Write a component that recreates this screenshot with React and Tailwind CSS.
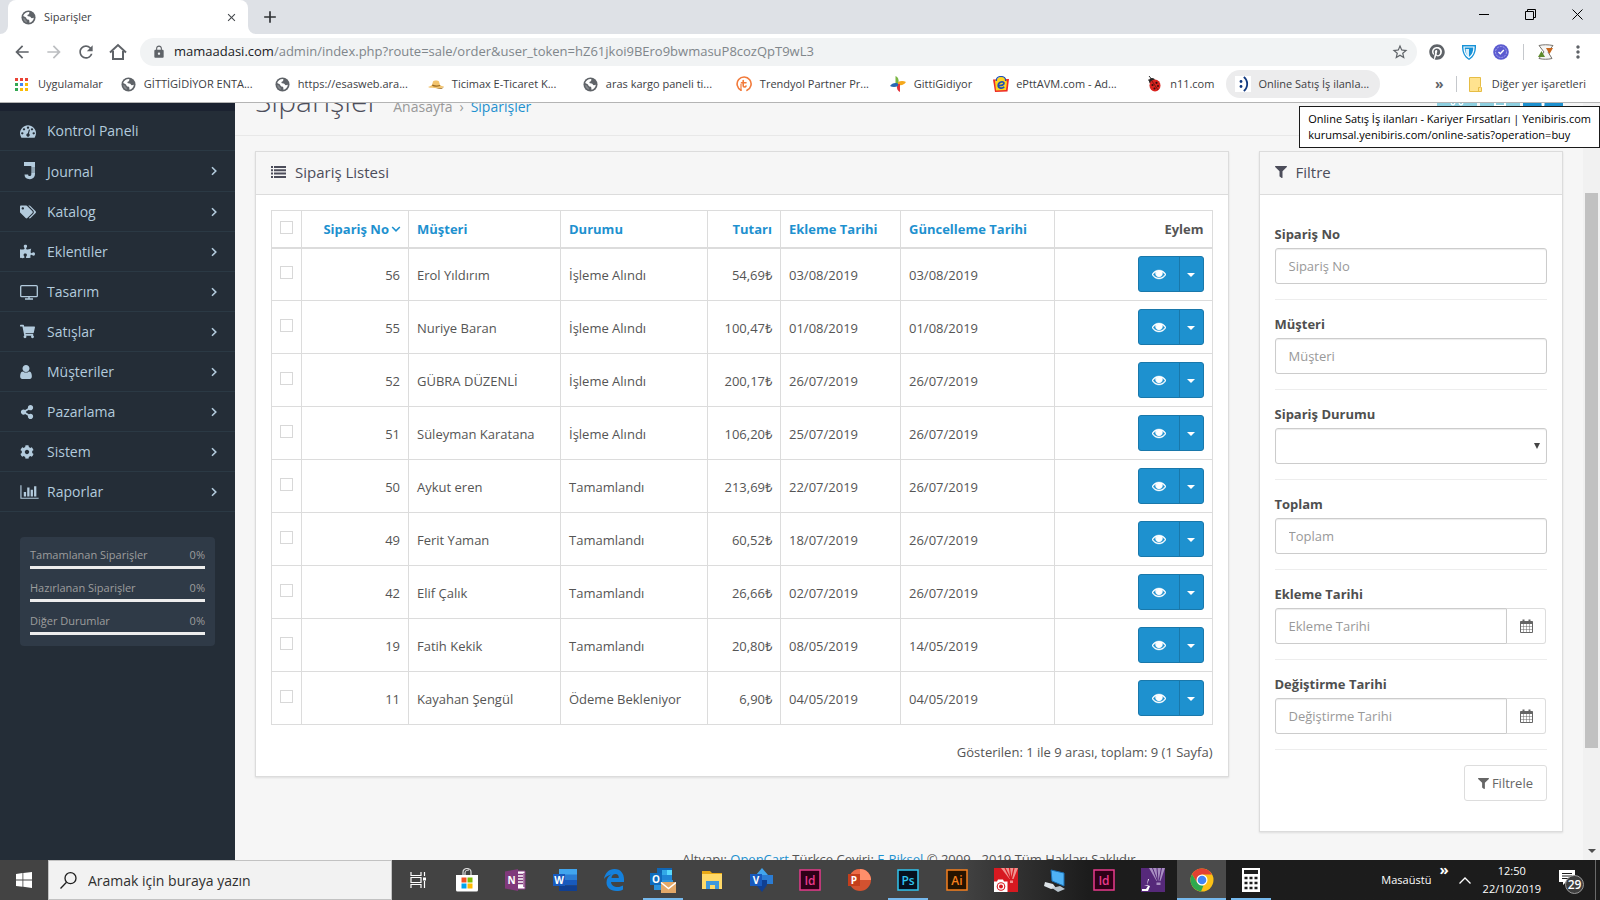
import { useState } from "react";
import {
  FaCog,
  FaFilter,
  FaPinterest,
  FaPlus,
  FaPrint,
  FaPuzzlePiece,
  FaShareAlt,
  FaShoppingCart,
  FaTags,
  FaTruck,
} from "react-icons/fa";
import { MdAdd, MdArrowBack, MdArrowForward, MdClose, MdLock, MdMoreVert, MdRefresh, MdStarBorder } from "react-icons/md";

const ORDERS = [
  { id: 56, customer: "Erol Yıldırım", status: "İşleme Alındı", total: "54,69₺", added: "03/08/2019", modified: "03/08/2019" },
  { id: 55, customer: "Nuriye Baran", status: "İşleme Alındı", total: "100,47₺", added: "01/08/2019", modified: "01/08/2019" },
  { id: 52, customer: "GÜBRA DÜZENLİ", status: "İşleme Alındı", total: "200,17₺", added: "26/07/2019", modified: "26/07/2019" },
  { id: 51, customer: "Süleyman Karatana", status: "İşleme Alındı", total: "106,20₺", added: "25/07/2019", modified: "26/07/2019" },
  { id: 50, customer: "Aykut eren", status: "Tamamlandı", total: "213,69₺", added: "22/07/2019", modified: "26/07/2019" },
  { id: 49, customer: "Ferit Yaman", status: "Tamamlandı", total: "60,52₺", added: "18/07/2019", modified: "26/07/2019" },
  { id: 42, customer: "Elif Çalık", status: "Tamamlandı", total: "26,66₺", added: "02/07/2019", modified: "26/07/2019" },
  { id: 19, customer: "Fatih Kekik", status: "Tamamlandı", total: "20,80₺", added: "08/05/2019", modified: "14/05/2019" },
  { id: 11, customer: "Kayahan Şengül", status: "Ödeme Bekleniyor", total: "6,90₺", added: "04/05/2019", modified: "04/05/2019" },
];

const STATS = ["Tamamlanan Siparişler", "Hazırlanan Siparişler", "Diğer Durumlar"];

/* ---------- admin icons ---------- */

function Dashboard() {
  return (
    <svg viewBox="0 0 1792 1792" className="h-4 w-4" fill="currentColor" aria-hidden="true">
      <path d="M384 1152q0-53-37.5-90.5t-90.5-37.5-90.5 37.5-37.5 90.5 37.5 90.5 90.5 37.5 90.5-37.5 37.5-90.5zm192-448q0-53-37.5-90.5t-90.5-37.5-90.5 37.5-37.5 90.5 37.5 90.5 90.5 37.5 90.5-37.5 37.5-90.5zm428 481l101-382q6-26-7.5-48.5t-38.5-29.5-48 6.5-30 39.5l-101 382q-60 5-107 43.5t-63 98.5q-20 77 20 146t117 89 146-20 89-117q16-60-6-117t-72-91zm660-33q0-53-37.5-90.5t-90.5-37.5-90.5 37.5-37.5 90.5 37.5 90.5 90.5 37.5 90.5-37.5 37.5-90.5zm-640-640q0-53-37.5-90.5t-90.5-37.5-90.5 37.5-37.5 90.5 37.5 90.5 90.5 37.5 90.5-37.5 37.5-90.5zm448 192q0-53-37.5-90.5t-90.5-37.5-90.5 37.5-37.5 90.5 37.5 90.5 90.5 37.5 90.5-37.5 37.5-90.5zm320 448q0 261-141 483-19 29-54 29h-1402q-35 0-54-29-141-221-141-483 0-182 71-348t191-286 286-191 348-71 348 71 286 191 191 286 71 348z" />
    </svg>
  );
}

function JournalMark() {
  return (
    <svg viewBox="0 0 16 20" className="ml-px h-5 w-4" fill="currentColor" aria-hidden="true">
      <path d="M3 1h11v12a5 5 0 0 1-5.200 5.200c-3.500 0-5.300-1.900-5.300-4.700h3.600c0 1 .6 1.500 1.600 1.500s1.600-.6 1.600-1.800V5H3z" />
      <path d="M10 7H14M10 9H14M10 11H14" stroke="#242d37" strokeWidth=".5" />
    </svg>
  );
}

function Television() {
  return (
    <svg viewBox="0 0 18 16" className="h-4 w-[18px]" fill="none" stroke="currentColor" aria-hidden="true">
      <rect x=".7" y="1.700" width="16.600" height="11" rx="1" strokeWidth="1.300" />
      <path d="M5 15h8M9 12.500V15" strokeWidth="1.400" />
    </svg>
  );
}

function UserIcon() {
  return (
    <svg viewBox="256 128 1280 1536" className="h-[14px] w-3" fill="currentColor" aria-hidden="true">
      <path d="M1536 1399q0 109-62.500 187t-150.500 78h-854q-88 0-150.500-78t-62.500-187q0-85 8.500-160.500t31.500-152 58.500-131 94-89 134.500-34.500q131 128 313 128t313-128q76 0 134.500 34.500t94 89 58.500 131 31.500 152 8.500 160.500zm-256-887q0 159-112.500 271.500t-271.500 112.500-271.500-112.500-112.500-271.500 112.500-271.500 271.500-112.500 271.500 112.500 112.500 271.500z" />
    </svg>
  );
}

function BarChart() {
  return (
    <svg viewBox="0 0 2048 1792" className="h-4 w-[19px]" fill="currentColor" aria-hidden="true">
      <path d="M640 896v512h-256v-512h256zm384-512v1024h-256v-1024h256zm1024 1152v128h-2048v-1536h128v1408h1920zm-640-896v768h-256v-768h256zm384-384v1152h-256v-1152h256z" />
    </svg>
  );
}

function ListIcon() {
  return (
    <svg viewBox="0 0 15 12" className="h-3 w-[15px]" fill="currentColor" aria-hidden="true">
      <path d="M0 0h2v2H0zM3 0h12v2H3zM0 3.300h2v2H0zM3 3.300h12v2H3zM0 6.600h2v2H0zM3 6.600h12v2H3zM0 10h2v2H0zM3 10h12v2H3z" />
    </svg>
  );
}

function Eye() {
  return (
    <svg viewBox="0 0 1792 1792" className="h-[14px] w-[14px]" fill="currentColor" stroke="currentColor" strokeWidth="50" aria-hidden="true">
      <path d="M1664 960q-152-236-381-353 61 104 61 225 0 185-131.500 316.500t-316.500 131.500-316.500-131.500-131.500-316.500q0-121 61-225-229 117-381 353 133 205 333.500 326.500t434.500 121.500 434.500-121.500 333.500-326.500zm-720-384q0-20-14-34t-34-14q-125 0-214.500 89.500t-89.500 214.500q0 20 14 34t34 14 34-14 14-34q0-86 61-147t147-61q20 0 34-14t14-34zm848 384q0 34-20 69-140 230-376.500 368.500t-499.500 138.500-499.500-139-376.500-368q-20-35-20-69t20-69q140-229 376.500-368t499.500-139 499.500 139 376.500 368q20 35 20 69z" />
      <circle cx="896" cy="832" r="330" />
    </svg>
  );
}

function Calendar() {
  return (
    <svg viewBox="0 0 13 14" className="h-[14px] w-[13px]" fill="none" stroke="currentColor" aria-hidden="true">
      <path d="M.5 3.500h12v10H.5z" />
      <path d="M.5 2.500h12v2H.5z" fill="currentColor" />
      <path d="M3.500.5v3M9.500.5v3" strokeWidth="2" />
      <path d="M3.500 5v8M6.500 5v8M9.500 5v8M1 7.500h11M1 10.500h11" strokeWidth=".5" />
    </svg>
  );
}

function Angle({ down = false }) {
  return (
    <svg viewBox="0 0 8 10" className={down ? "h-[10px] w-2 rotate-90" : "h-[10px] w-2"} fill="none" stroke="currentColor" strokeWidth="1.600" aria-hidden="true">
      <path d="M2 1.200 5.800 5 2 8.800" />
    </svg>
  );
}

const MENU = [
  { label: "Kontrol Paneli", icon: <Dashboard />, leaf: true },
  { label: "Journal", icon: <JournalMark /> },
  { label: "Katalog", icon: <FaTags className="h-4 w-4" /> },
  { label: "Eklentiler", icon: <FaPuzzlePiece className="h-[15px] w-[15px]" /> },
  { label: "Tasarım", icon: <Television /> },
  { label: "Satışlar", icon: <FaShoppingCart className="h-[15px] w-[15px]" /> },
  { label: "Müşteriler", icon: <UserIcon /> },
  { label: "Pazarlama", icon: <FaShareAlt className="h-[14px] w-[14px]" /> },
  { label: "Sistem", icon: <FaCog className="h-[14px] w-[14px]" /> },
  { label: "Raporlar", icon: <BarChart /> },
];

/* ---------- browser ---------- */

function Globe() {
  return (
    <svg viewBox="0 0 16 16" className="h-[15px] w-[15px] shrink-0" aria-hidden="true">
      <circle cx="8" cy="8" r="7.500" fill="#5f6368" />
      <path d="M9 2.200c-.6 1 .2 1.700-.6 2.300-1 .6-1.700.6-1.500 1.700.2.900 1.500.6 2.600.8 1.200.3.900 1.800 2.200 1.900.8 0 1.400-.7 2-.6-.2 2.600-2.200 4.900-4.800 5.400.3-1.100-.1-1.700-.1-2.500 0-.9-.9-1-1.900-1.200-1.300-.2-1-1.600-2-2.300L2.300 6.300C3 4 5.700 1.800 9 2.200z" fill="#fff" />
      <path d="M2.300 8.500c1 .2 2.100.3 2.400 1.300.3 1.200 1.400 1.200 1.500 2.200v1.600C4 13 2.300 10.900 2.300 8.500z" fill="#fff" opacity=".25" />
    </svg>
  );
}

function HatIcon() {
  return (
    <svg viewBox="0 0 16 16" className="h-4 w-4 shrink-0" aria-hidden="true">
      <path d="M0 11c2-1 3-1 4-2l1-3.500c1-1.300 5-1.300 6 0L12 9c1 .8 2 1.200 4 1.500-1 1.500-4 2-7 1.700S2 12.500 0 11z" fill="#f3c46d" />
      <path d="M4.500 8.500c3 1.200 5 1.200 7.500.5l.2 1c-3 1-6 1-8.200-.3zM8 12c3 .5 6.500.4 8-1.300-1.500 2.800-5 2.800-8 1.300z" fill="#9b6a22" />
    </svg>
  );
}

function TrendyolIcon() {
  return (
    <svg viewBox="0 0 16 16" className="h-4 w-4 shrink-0" fill="none" stroke="#f27a3a" strokeLinecap="round" aria-hidden="true">
      <path d="M5 14.200A7 7 0 1 1 11 14.300" strokeWidth="1.600" />
      <path d="M7.200 4.500v5.200c0 1.600 2.300 1.800 2.800.3M5.500 6.800H10" strokeWidth="1.600" />
      <path d="M5 14.300V8" strokeWidth="1.200" />
    </svg>
  );
}

function GittiIcon() {
  return (
    <svg viewBox="0 0 16 16" className="h-4 w-4 shrink-0" aria-hidden="true">
      <path d="M8 8H5.500V0C8 1 9 3 8.500 7z" fill="#7ab642" />
      <path d="M8 8V6c3-1.500 6-1 8 0-1.500 2.500-4 3.500-7 3z" fill="#f5a81c" />
      <path d="M8 8h2v8C7.500 15 6.500 12.500 7 9z" fill="#e5343d" />
      <path d="M8 8v2c-3 1.500-6 1-8 0 1.500-2.500 4-3.500 7-3z" fill="#2a68b2" />
    </svg>
  );
}

function EpttIcon() {
  return (
    <svg viewBox="0 0 16 16" className="h-4 w-4 shrink-0" aria-hidden="true">
      <path d="M0 3.500 16 3l-1.500 12.500L2 16z" fill="#ee2a24" />
      <path d="M2 5l3-3 3-1.500L12 2l2 4-1 8-10 .5z" fill="#ffd51e" />
      <path d="M3.500 5C3 2 5 .5 8 .5S13 2 12.500 5" fill="none" stroke="#1f4fb5" strokeWidth="1.200" />
      <path d="M4.700 9.300c3.500.6 6.500-.4 6.300-2.300-.3-2-5.600-1.400-5.800 2.300-.1 3.400 4.400 3.700 6 1.500" fill="none" stroke="#1f4fb5" strokeWidth="1.700" />
    </svg>
  );
}

function LadybugIcon() {
  return (
    <svg viewBox="0 0 16 16" className="h-4 w-4 shrink-0" aria-hidden="true">
      <path d="M2 0l2.500 3M1 4l3 .5" stroke="#333" />
      <circle cx="5" cy="5" r="3" fill="#2a2424" />
      <ellipse cx="8" cy="9.500" rx="5.500" ry="6" fill="#d9231f" />
      <path d="M5 5l6 9" stroke="#641310" strokeWidth=".8" />
      <circle cx="9.500" cy="6.800" r="1.100" fill="#331010" />
      <circle cx="11" cy="10" r="1" fill="#331010" />
      <circle cx="5.500" cy="9" r="1.100" fill="#331010" />
      <circle cx="7.500" cy="12.500" r="1" fill="#331010" />
    </svg>
  );
}

function SmileyIcon() {
  return (
    <svg viewBox="0 0 16 16" className="h-4 w-4 shrink-0" aria-hidden="true">
      <rect width="16" height="16" fill="#fff" />
      <circle cx="6" cy="5.500" r="1.400" fill="#123a80" />
      <circle cx="6" cy="10.500" r="1.400" fill="#123a80" />
      <path d="M8.800 1c4.500 3.500 4.500 10.500 0 14" fill="none" stroke="#123a80" strokeWidth="1.800" />
    </svg>
  );
}

const BOOKMARKS = [
  { label: "GİTTİGİDİYOR ENTA...", icon: <Globe />, wide: true },
  { label: "https://esasweb.ara...", icon: <Globe />, wide: true },
  { label: "Ticimax E-Ticaret K...", icon: <HatIcon />, wide: true },
  { label: "aras kargo paneli ti...", icon: <Globe />, wide: true },
  { label: "Trendyol Partner Pr...", icon: <TrendyolIcon />, wide: true },
  { label: "GittiGidiyor", icon: <GittiIcon /> },
  { label: "ePttAVM.com - Ad...", icon: <EpttIcon />, wide: true },
  { label: "n11.com", icon: <LadybugIcon /> },
  { label: "Online Satış İş ilanla...", icon: <SmileyIcon />, wide: true, active: true },
];

const APP_DOTS = ["#ea4335", "#ea4335", "#ea4335", "#34a853", "#4285f4", "#fbbc05", "#34a853", "#fbbc05", "#fbbc05"];

function TabStrip() {
  return (
    <div className="flex h-[34px] shrink-0 items-end bg-[#dee1e6]">
      <svg viewBox="0 0 8 8" className="h-2 w-2" fill="#fff" aria-hidden="true">
        <path d="M8 0v8H0a8 8 0 0 0 8-8z" />
      </svg>
      <div className="flex h-full w-60 items-center rounded-t-lg bg-white pr-[10px] pl-[13px]">
        <Globe />
        <span className="ml-2 flex-1 text-[11px] text-[#3c4043]">Siparişler</span>
        <button type="button" aria-label="Sekmeyi kapat">
          <MdClose className="h-[13px] w-[13px] text-[#45494d]" />
        </button>
      </div>
      <svg viewBox="0 0 8 8" className="h-2 w-2" fill="#fff" aria-hidden="true">
        <path d="M0 0v8h8a8 8 0 0 1-8-8z" />
      </svg>
      <button type="button" aria-label="Yeni sekme" className="flex h-full items-center pl-1">
        <MdAdd className="h-5 w-5 text-[#2f3235]" />
      </button>
      <div className="ml-auto flex h-full items-center gap-9 pr-[17px] pb-[6px]">
        <button type="button" aria-label="Küçült" className="h-px w-[10px] bg-black" />
        <button type="button" aria-label="Önceki boyut">
          <svg viewBox="0 0 11 11" className="h-[11px] w-[11px]" fill="none" stroke="#000" aria-hidden="true">
            <path d="M.5 2.500h8v8h-8zM2.500 2.500v-2h8v8h-2" />
          </svg>
        </button>
        <button type="button" aria-label="Kapat">
          <svg viewBox="0 0 11 11" className="h-[11px] w-[11px]" stroke="#000" aria-hidden="true">
            <path d="M.5.5l10 10M10.500.5l-10 10" />
          </svg>
        </button>
      </div>
    </div>
  );
}

function Toolbar() {
  return (
    <div className="flex h-9 shrink-0 items-center bg-white px-3 text-[#5f6368]">
      <button type="button" aria-label="Geri">
        <MdArrowBack className="h-5 w-5" />
      </button>
      <button type="button" aria-label="İleri" className="ml-3">
        <MdArrowForward className="h-5 w-5 text-[#bcbec1]" />
      </button>
      <button type="button" aria-label="Yenile" className="ml-3">
        <MdRefresh className="h-5 w-5" />
      </button>
      <button type="button" aria-label="Ana sayfa" className="ml-3">
        <svg viewBox="0 0 20 20" className="h-5 w-5" fill="none" stroke="currentColor" strokeWidth="2" aria-hidden="true">
          <path d="M2 10.500l8-7.500 8 7.500M5 9v8h10V9" />
        </svg>
      </button>
      <div className="ml-3 flex h-7 flex-1 items-center rounded-full bg-[#f1f3f4] pr-2 pl-3">
        <MdLock className="h-[14px] w-[14px]" />
        <span className="ml-2 flex-1 text-[13px] text-[#80868b]">
          <span className="text-[#202124]">mamaadasi.com</span>
          /admin/index.php?route=sale/order&amp;user_token=hZ61jkoi9BEro9bwmasuP8cozQpT9wL3
        </span>
        <button type="button" aria-label="Yer işareti ekle">
          <MdStarBorder className="h-[18px] w-[18px]" />
        </button>
      </div>
      <div className="ml-3 flex items-center gap-[14px]">
        <div className="flex items-center gap-4">
          <FaPinterest className="h-4 w-4" />
          <svg viewBox="0 0 16 16" className="h-4 w-4" aria-hidden="true">
            <path d="M1 1h14c.3 7-2 12-7 15C3 13 .7 8 1 1z" fill="#1692d8" />
            <path d="M3 3h10c0 5-1.500 8.500-5 10.800C4.500 11.500 3 8 3 3z" fill="none" stroke="#fff" strokeWidth="1.200" />
            <path d="M8 5v8.500C5.600 11.500 4.700 9 4.600 5z" fill="#fff" opacity=".85" />
          </svg>
          <svg viewBox="0 0 16 16" className="h-4 w-4" aria-hidden="true">
            <circle cx="8" cy="8" r="7.800" fill="#5b5bd0" />
            <circle cx="8" cy="8" r="5.500" fill="none" stroke="#b8b8f2" strokeWidth=".8" strokeDasharray="2 1" />
            <path d="M5.500 8l1.800 1.800L10.800 6" fill="none" stroke="#fff" strokeWidth="1.400" />
          </svg>
        </div>
        <span className="h-4 w-px bg-[#c5c8cc]" />
        <svg viewBox="0 0 16 16" className="h-4 w-4" aria-hidden="true">
          <path d="M1 1.500c4-1 9-1 14 0L10 8l4 6.500c-4 1-9 1-13 0L6 8z" fill="#f6f6f4" stroke="#77736e" />
          <path d="M0 13l3.500-6L7 13z" fill="#5d8a2b" />
          <path d="M8 4h7l-3.500 6z" fill="#c8651b" />
        </svg>
        <button type="button" aria-label="Menü">
          <MdMoreVert className="h-5 w-5" />
        </button>
      </div>
    </div>
  );
}

function BookmarkBar() {
  return (
    <div className="flex h-8 shrink-0 items-center bg-white pr-[14px] pb-1 pl-[6px] text-[11px] whitespace-nowrap text-[#3c4043]">
      <a href="#apps" className="flex items-center gap-[10px] px-[9px]">
        <svg viewBox="0 0 13 13" className="h-[13px] w-[13px]" aria-hidden="true">
          {APP_DOTS.map((color, i) => (
            <rect key={i} x={(i % 3) * 5} y={Math.floor(i / 3) * 5} width="3" height="3" fill={color} />
          ))}
        </svg>
        Uygulamalar
      </a>
      {BOOKMARKS.map((item) => (
        <a
          key={item.label}
          href="#bookmark"
          className={`flex h-7 items-center gap-2 pl-[9px] ${item.wide ? "pr-[9px]" : "pr-3"} ${item.active ? "rounded-full bg-[#ececed]" : ""}`}
        >
          <span className="flex w-[15px] justify-center">{item.icon}</span>
          <span className={item.wide ? "w-[113px]" : ""}>{item.label}</span>
        </a>
      ))}
      <button type="button" className="mr-3 ml-auto pb-[2px] text-[14px] font-bold text-[#5f6368]" aria-label="Diğerleri">
        »
      </button>
      <span className="h-4 w-px bg-[#c5c8cc]" />
      <a href="#other" className="ml-3 flex items-center gap-[10px]">
        <svg viewBox="0 0 13 15" className="h-[15px] w-[13px]" aria-hidden="true">
          <path d="M.5.5h11v9l1 1v4H.5z" fill="#ffe38f" stroke="#e6bd45" />
          <path d="M9.500 14.500v-4h2" fill="none" stroke="#e6bd45" />
        </svg>
        Diğer yer işaretleri
      </a>
    </div>
  );
}

/* ---------- admin page ---------- */

function Sidebar() {
  return (
    <aside className="w-[235px] shrink-0 border-t-8 border-[#1b2230] bg-[#242d37]">
      <nav>
        {MENU.map((item) => (
          <a
            key={item.label}
            href="#menu"
            className="flex items-center border-b border-[#2b3944] py-[10px] pr-[17px] pl-5 text-[14px] leading-[19px] text-[#b3cbdd]"
          >
            <span className="flex w-[27px]">{item.icon}</span>
            <span className="flex-1">{item.label}</span>
            {item.leaf ? null : <Angle />}
          </a>
        ))}
      </nav>
      <ul className="mx-5 mt-[25px] rounded-sm bg-[#2f3a47] px-[10px] pt-[9px] pb-[10px] text-[11px] text-[#9d9d9d]">
        {STATS.map((label) => (
          <li key={label} className="h-[33px] last:h-6">
            <div className="flex h-5 items-center justify-between pb-[2px]">
              <span>{label}</span>
              <span>0%</span>
            </div>
            <div className="h-[3px] bg-[#ededed]" />
          </li>
        ))}
      </ul>
    </aside>
  );
}

function PageHeader() {
  const iconButton = "flex h-9 w-10 items-center justify-center rounded-[3px] text-white";

  return (
    <div className="flex h-[33px] shrink-0 items-end overflow-hidden border-b border-[#e8e8e8] px-5 pb-[18px]">
      <h1 className="text-[30px] leading-[33px] font-light text-[#4c4d5a]">Siparişler</h1>
      <ul className="ml-[14px] flex gap-[7px] text-[14px] leading-5 text-[#999]">
        <li>Anasayfa</li>
        <li>›</li>
        <li>
          <a href="#orders" className="text-[#1e91cf]">Siparişler</a>
        </li>
      </ul>
      <div className="ml-auto flex gap-[3px]">
        <button type="button" aria-label="Kargo listesi" className={`${iconButton} bg-[#8dcfe0]`}>
          <FaTruck />
        </button>
        <button type="button" aria-label="Fatura yazdır" className={`${iconButton} bg-[#8dcfe0]`}>
          <FaPrint />
        </button>
        <button type="button" aria-label="Yeni ekle" className={`${iconButton} bg-[#1e91cf]`}>
          <FaPlus />
        </button>
      </div>
    </div>
  );
}

function Panel({ title, icon, className = "", children }) {
  return (
    <section className={`border border-[#dcdcdc] bg-white shadow-[0_1px_2px_rgba(0,0,0,0.1)] ${className}`}>
      <h2 className="flex h-[43px] items-center gap-[9px] border-b border-[#dcdcdc] bg-[#f6f6f6] px-[15px] pb-[2px] text-[15px] text-[#4c4d5a]">
        {icon}
        {title}
      </h2>
      <div className="p-[15px]">{children}</div>
    </section>
  );
}

function Tick({ label, checked, onChange }) {
  return (
    <input
      type="checkbox"
      aria-label={label}
      checked={checked}
      onChange={onChange}
      className="mb-[3px] block h-[13px] w-[13px] appearance-none border border-[#d8d8d8] bg-white checked:bg-[#1e91cf]"
    />
  );
}

function OrderTable() {
  const [selected, setSelected] = useState([]);

  function toggle(id) {
    setSelected((prev) => (prev.includes(id) ? prev.filter((x) => x !== id) : [...prev, id]));
  }

  const allSelected = selected.length === ORDERS.length;
  const cell = "border border-[#dcdcdc] px-2";
  const textCell = `${cell} pt-[2px]`;

  return (
    <table className="w-full table-fixed border-collapse text-[13px] leading-[18px] text-[#555]">
      <colgroup>
        <col className="w-[30px]" />
        <col className="w-[107px]" />
        <col className="w-[152px]" />
        <col className="w-[147px]" />
        <col className="w-[73px]" />
        <col className="w-[120px]" />
        <col className="w-[154px]" />
        <col />
      </colgroup>
      <thead>
        <tr className="h-[37px] text-left font-bold text-[#1e91cf] [&>th]:border-b-2">
          <th className={cell}>
            <Tick label="Tümünü seç" checked={allSelected} onChange={() => setSelected(allSelected ? [] : ORDERS.map((o) => o.id))} />
          </th>
          <th className={cell}>
            <a href="#id" className="flex items-center justify-end gap-[3px]">
              Sipariş No <Angle down />
            </a>
          </th>
          <th className={cell}><a href="#customer">Müşteri</a></th>
          <th className={cell}><a href="#status">Durumu</a></th>
          <th className={`${cell} text-right`}><a href="#total">Tutarı</a></th>
          <th className={cell}><a href="#added">Ekleme Tarihi</a></th>
          <th className={cell}><a href="#modified">Güncelleme Tarihi</a></th>
          <th className={`${cell} text-right text-[#555]`}>Eylem</th>
        </tr>
      </thead>
      <tbody>
        {ORDERS.map((order) => (
          <tr key={order.id} className="h-[53px]">
            <td className={cell}>
              <Tick label={`Sipariş ${order.id}`} checked={selected.includes(order.id)} onChange={() => toggle(order.id)} />
            </td>
            <td className={`${textCell} text-right`}>{order.id}</td>
            <td className={textCell}>{order.customer}</td>
            <td className={textCell}>{order.status}</td>
            <td className={`${textCell} text-right`}>{order.total}</td>
            <td className={textCell}>{order.added}</td>
            <td className={textCell}>{order.modified}</td>
            <td className={cell}>
              <div className="ml-auto flex h-9 w-[66px] rounded-[3px] border border-[#1978ab] bg-[#1e91cf] text-white">
                <button type="button" aria-label="Görüntüle" className="flex w-10 items-center justify-center">
                  <Eye />
                </button>
                <button type="button" aria-label="Diğer işlemler" className="flex flex-1 items-center justify-center border-l border-[#1978ab]">
                  <svg viewBox="0 0 8 4" className="mt-[2px] h-1 w-2" fill="currentColor" aria-hidden="true">
                    <path d="M0 0h8L4 4z" />
                  </svg>
                </button>
              </div>
            </td>
          </tr>
        ))}
      </tbody>
    </table>
  );
}

function Field({ id, label, children }) {
  return (
    <div className="border-b border-[#ededed] py-[15px]">
      <label htmlFor={id} className="mb-[5px] block text-[13px] leading-[18px] font-bold text-[#4f4f4f]">
        {label}
      </label>
      {children}
    </div>
  );
}

const inputClass =
  "h-9 w-full min-w-0 rounded-[3px] border border-[#ccc] bg-white px-[13px] text-[13px] text-[#555] shadow-[inset_0_1px_1px_rgba(0,0,0,0.075)] placeholder:text-[#999]";

function DateField({ id, label }) {
  return (
    <Field id={id} label={label}>
      <div className="flex pr-px">
        <input id={id} type="text" placeholder={label} className={`${inputClass} rounded-r-none`} />
        <button
          type="button"
          aria-label={`${label} seç`}
          className="flex w-[39px] shrink-0 items-center justify-center rounded-r-[3px] border border-l-0 border-[#ddd] text-[#666]"
        >
          <Calendar />
        </button>
      </div>
    </Field>
  );
}

function FilterPanel() {
  return (
    <Panel title="Filtre" icon={<FaFilter className="h-3 w-3" />}>
      <Field id="order-id" label="Sipariş No">
        <input id="order-id" type="text" placeholder="Sipariş No" className={inputClass} />
      </Field>
      <Field id="customer" label="Müşteri">
        <input id="customer" type="text" placeholder="Müşteri" className={inputClass} />
      </Field>
      <Field id="order-status" label="Sipariş Durumu">
        <div className="relative">
          <select id="order-status" defaultValue="" className={`${inputClass} appearance-none`}>
            <option value=""></option>
            <option value="processing">İşleme Alındı</option>
            <option value="complete">Tamamlandı</option>
          </select>
          <svg viewBox="0 0 6 6" className="pointer-events-none absolute top-[15px] right-[7px] h-[6px] w-[6px]" fill="#444" aria-hidden="true">
            <path d="M0 0h6L3 6z" />
          </svg>
        </div>
      </Field>
      <Field id="total" label="Toplam">
        <input id="total" type="text" placeholder="Toplam" className={inputClass} />
      </Field>
      <DateField id="date-added" label="Ekleme Tarihi" />
      <DateField id="date-modified" label="Değiştirme Tarihi" />
      <div className="flex justify-end py-[15px]">
        <button type="button" className="flex h-9 items-center gap-[3px] rounded-[3px] border border-[#ddd] px-[13px] pt-px text-[13px] text-[#666]">
          <FaFilter className="h-[11px] w-[11px]" />
          Filtrele
        </button>
      </div>
    </Panel>
  );
}

function Scrollbar() {
  return (
    <div className="flex w-[17px] shrink-0 flex-col items-center bg-[#f1f1f1]" aria-hidden="true">
      <div className="flex-[90]" />
      <div className="w-[13px] flex-[555] bg-[#c1c1c1]" />
      <div className="flex flex-[112] items-end">
        <svg viewBox="0 0 8 4" className="mb-[7px] h-1 w-2" fill="#505050">
          <path d="M0 0h8L4 4z" />
        </svg>
      </div>
    </div>
  );
}

/* ---------- taskbar ---------- */

function Badge({ text, fill, stroke }) {
  return (
    <svg viewBox="0 0 22 22" className="h-[22px] w-[22px]" aria-hidden="true">
      <rect x="1" y="1" width="20" height="20" fill={fill} stroke={stroke} strokeWidth="1.500" />
      <text x="11" y="15.500" textAnchor="middle" fontSize="12" fontWeight="600" fontFamily="Open Sans, sans-serif" fill={stroke}>
        {text}
      </text>
    </svg>
  );
}

function Letter({ x, y, children }) {
  return (
    <text x={x} y={y} textAnchor="middle" fontSize="10" fontWeight="700" fontFamily="Open Sans, sans-serif" fill="#fff">
      {children}
    </text>
  );
}

const art = "h-6 w-6";

const TASKS = [
  {
    name: "Görev görünümü",
    icon: (
      <svg viewBox="0 0 24 24" className={art} fill="none" stroke="#fff" strokeWidth="1.200">
        <path d="M5 4v3.500h10V4M5 20v-3.500h10V20M5 9.500h10v5H5zM18.500 4v4M18.500 13v7" />
        <path d="M17 9.500h3v3h-3z" fill="#fff" stroke="none" />
      </svg>
    ),
  },
  {
    name: "Store",
    icon: (
      <svg viewBox="0 0 24 24" className={art}>
        <path d="M8 7V4a4 3.500 0 0 1 8 0v3M10 7V5a4 3 0 0 1 4-3" fill="none" stroke="#ddd" strokeWidth="1.200" />
        <path d="M1 7h22v15a1.500 1.500 0 0 1-1.500 1.500h-19A1.500 1.500 0 0 1 1 22z" fill="#fff" />
        <path d="M6.500 9.500h5v5h-5z" fill="#f25022" />
        <path d="M12.500 9.500h5v5h-5z" fill="#7fba00" />
        <path d="M6.500 15.500h5v5h-5z" fill="#00a4ef" />
        <path d="M12.500 15.500h5v5h-5z" fill="#ffb900" />
      </svg>
    ),
  },
  {
    name: "OneNote",
    icon: (
      <svg viewBox="0 0 24 24" className={art}>
        <path d="M11 3h10v18H11z" fill="#fff" stroke="#8a3c85" />
        <path d="M14 6.500h5M14 9.500h5M14 12.500h5M14 15.500h5M20 5v14" stroke="#80397b" strokeWidth="1.300" />
        <path d="M1 3.500 14 1v22L1 20.500z" fill="#80397b" />
        <Letter x="7.500" y="15.500">N</Letter>
      </svg>
    ),
  },
  {
    name: "Word",
    icon: (
      <svg viewBox="0 0 24 24" className={art}>
        <path d="M6 1h18v6H6z" fill="#41a5ee" />
        <path d="M6 6.500h18V12H6z" fill="#2b7cd3" />
        <path d="M6 12h18v5.500H6z" fill="#185abd" />
        <path d="M6 17.500h18V23H6z" fill="#103f91" />
        <path d="M0 6h12v12H0z" fill="#185abd" />
        <Letter x="6" y="15.500">W</Letter>
      </svg>
    ),
  },
  {
    name: "Edge",
    icon: (
      <svg viewBox="0 0 24 24" className={art}>
        <path d="M2 11C3 5 7 1 12.500 1 19 1 22 6 22 11v3H9c.3 3.500 3 5 6.500 5 2.200 0 4.200-.6 5.500-1.500v4C19.500 22.500 17 23 14.500 23 8 23 4.500 19 4.500 14.500c0-4 2-6.500 5-8C6 7 3.500 9 2 11zm7.500-1h7.300c0-2.500-1-4-3.300-4s-3.800 1.600-4 4z" fill="#1480dc" />
      </svg>
    ),
  },
  {
    name: "Outlook",
    open: true,
    icon: (
      <svg viewBox="0 0 26 26" className="h-[26px] w-[26px]">
        <path d="M7 1h15v14H7z" fill="#1066b5" />
        <path d="M12 3h5v5h-5z" fill="#32a9e7" />
        <path d="M17 3h5v5h-5z" fill="#58d9fd" />
        <path d="M12 8h10v6H12z" fill="#1f86d6" />
        <path d="M4 13h19v10H4z" fill="#2b93dd" />
        <path d="M0 6h12v12H0z" fill="#0f6cbd" />
        <Letter x="6" y="15.500">O</Letter>
        <path d="M11 15h15v11H11z" fill="#e3a868" />
        <path d="M11 15.500l7.500 6 7.500-6" fill="none" stroke="#fff" strokeWidth="1.500" />
      </svg>
    ),
  },
  {
    name: "Dosya Gezgini",
    icon: (
      <svg viewBox="0 0 24 24" className={art}>
        <path d="M2 3h8l2 2h10v15H2z" fill="#e9a916" />
        <path d="M2 6h20v15H2z" fill="#ffd968" />
        <path d="M6 21v-8h13v8h-4v-4h-5v4z" fill="#3f98dc" />
      </svg>
    ),
  },
  {
    name: "Visio",
    icon: (
      <svg viewBox="0 0 24 24" className={art}>
        <path d="M13 0l6 7-6 7-6-7z" fill="#41a5ee" />
        <path d="M12 7h12v9H12z" fill="#2b7cd3" />
        <path d="M8 12h10v5l-5 7-5-6z" fill="#103f91" />
        <path d="M1 6h12v12H1z" fill="#185abd" />
        <Letter x="7" y="15.500">V</Letter>
      </svg>
    ),
  },
  { name: "InDesign", icon: <Badge text="Id" fill="#2e0017" stroke="#e83a8c" /> },
  {
    name: "PowerPoint",
    icon: (
      <svg viewBox="0 0 24 24" className={art}>
        <circle cx="13" cy="12" r="11" fill="#d35230" />
        <path d="M13 1a11 11 0 0 1 11 11H13z" fill="#ff8f6b" />
        <path d="M13 1v11H2A11 11 0 0 1 13 1z" fill="#ed6c47" />
        <path d="M1 6h12v12H1z" fill="#c43e1c" />
        <Letter x="7" y="15.500">P</Letter>
      </svg>
    ),
  },
  { name: "Photoshop", open: true, icon: <Badge text="Ps" fill="#06101e" stroke="#31c5f0" /> },
  { name: "Illustrator", icon: <Badge text="Ai" fill="#261300" stroke="#f7801e" /> },
  {
    name: "Photo-Paint",
    icon: (
      <svg viewBox="0 0 24 24" className={art}>
        <path d="M0 0h24v24H0z" fill="#d71920" />
        <path d="M7 0h17l-4.500 11h-4z" fill="#f0938f" />
        <path d="M11 0l5.500 11M15.500 0l1.500 11M20 0l-2.500 11" stroke="#d71920" strokeWidth="1.200" />
        <path d="M16 12.500h3v2.500h-3z" fill="#f0938f" />
        <path d="M0 13.500h3l1-2h5l1 2h3.500V24H0z" fill="#fff" />
        <circle cx="7" cy="18.500" r="4.300" fill="#d71920" />
        <circle cx="7" cy="18.500" r="3.200" fill="#fff" />
        <circle cx="7" cy="18.500" r="2" fill="#d71920" />
      </svg>
    ),
  },
  {
    name: "Bilgisayar",
    icon: (
      <svg viewBox="0 0 24 24" className={art}>
        <path d="M8 2l13 3v13L9 13z" fill="#4fb2f5" stroke="#1a6fb3" />
        <path d="M2 14l8 2 3 4-5 1-7-3z" fill="#dde3e8" />
        <path d="M9 20l8-2 5 3-7 3z" fill="#b9c4cc" />
      </svg>
    ),
  },
  { name: "InDesign 2", icon: <Badge text="Id" fill="#2e0017" stroke="#e83a8c" /> },
  {
    name: "CorelDRAW",
    icon: (
      <svg viewBox="0 0 24 24" className={art}>
        <path d="M0 0h24v24H0z" fill="#56297a" />
        <path d="M8 0h16l-4.500 13h-4z" fill="#a98fc2" />
        <path d="M11.500 0l5 13M16 0l1 13M20.500 0l-2.500 13" stroke="#56297a" />
        <path d="M15.500 14.500h4V17h-4z" fill="#a98fc2" />
        <path d="M7 11l-1 6H3l4 1-2 3H1v2h6l2-5-3-1 2-6z" fill="#fff" />
      </svg>
    ),
  },
  {
    name: "Chrome",
    open: true,
    active: true,
    icon: (
      <svg viewBox="0 0 24 24" className={art}>
        <circle cx="12" cy="12" r="11.500" fill="#fbc116" />
        <path d="M12 .5A11.500 11.500 0 0 1 22 6.500H12L7.200 14.800 2 6.300A11.500 11.500 0 0 1 12 .5z" fill="#e34133" />
        <path d="M2 6.300l5.200 8.500L12 17.500h1.500L11 23.500A11.500 11.500 0 0 1 2 6.300z" fill="#2da94f" />
        <circle cx="12" cy="12" r="5.500" fill="#fff" />
        <circle cx="12" cy="12" r="4.300" fill="#4285f4" />
      </svg>
    ),
  },
  {
    name: "Hesap Makinesi",
    open: true,
    icon: (
      <svg viewBox="0 0 24 24" className={art}>
        <path d="M3 0h18v24H3z" fill="#fff" />
        <path d="M5 2h14v4H5z" fill="#1e1e1e" />
        <path d="M5.500 10h13M5.500 15h13M5.500 20h13" stroke="#1e1e1e" strokeWidth="2.500" strokeDasharray="3 2" />
      </svg>
    ),
  },
];

function Taskbar() {
  return (
    <footer className="flex h-10 shrink-0 items-stretch bg-linear-to-r from-[#434343] from-60% to-[#1c1c1c] to-68% text-white">
      <button type="button" aria-label="Başlat" className="flex w-12 items-center justify-center">
        <svg viewBox="0 0 16 16" className="h-4 w-4" fill="#fff" aria-hidden="true">
          <path d="M0 2l6.500-.9v6.400H0zM7.300 1 16 0v7.500H7.300zM0 8.400h6.500v6.400L0 14zM7.300 8.400H16V16l-8.700-1.200z" />
        </svg>
      </button>
      <label className="flex w-[344px] items-center border border-[#c2c2c2] bg-[#f2f2f2] pl-[11px] text-[#1f1f1f]">
        <svg viewBox="0 0 17 17" className="h-[17px] w-[17px]" fill="none" stroke="currentColor" strokeWidth="1.300" aria-hidden="true">
          <circle cx="10.500" cy="6.200" r="5.500" />
          <path d="M6.500 10.300.5 16.500" />
        </svg>
        <input
          type="text"
          aria-label="Ara"
          placeholder="Aramak için buraya yazın"
          className="ml-[11px] flex-1 bg-transparent text-[14px] placeholder:text-[#2f2f2f]"
        />
      </label>
      <div className="flex pl-px">
        {TASKS.map((task) => (
          <button
            key={task.name}
            type="button"
            aria-label={task.name}
            className={`relative flex w-[49px] items-center justify-center ${task.active ? "bg-[#4b4b4b]" : ""}`}
          >
            {task.icon}
            {task.open ? <span className={`absolute bottom-0 h-[2px] bg-[#76b9ed] ${task.active ? "w-full" : "w-10"}`} /> : null}
          </button>
        ))}
      </div>
      <div className="ml-auto flex items-center text-[11px]">
        <span>Masaüstü</span>
        <span className="ml-2 self-start text-[15px] leading-[18px] font-bold">»</span>
        <svg viewBox="0 0 12 7" className="ml-[10px] h-[7px] w-3" fill="none" stroke="#fff" strokeWidth="1.300" aria-hidden="true">
          <path d="M.5 6.500 6 1l5.500 5.500" />
        </svg>
        <div className="ml-3 text-center leading-[18px]">
          <div>12:50</div>
          <div>22/10/2019</div>
        </div>
        <svg viewBox="0 0 28 28" className="ml-4 h-7 w-7" aria-hidden="true">
          <path d="M2 4h16v12H9l-3 3v-3H2z" fill="#fff" />
          <path d="M5 7.500h10M5 10h10M5 12.500h7" stroke="#1c1c1c" />
          <circle cx="17.500" cy="18.500" r="9" fill="#3d3d3d" stroke="#999" />
          <text x="17.500" y="23" textAnchor="middle" fontSize="12" fontWeight="600" fontFamily="Open Sans, sans-serif" fill="#fff">
            29
          </text>
        </svg>
        <span className="ml-[10px] h-full w-[5px] border-l border-[#6a6a6a]" />
      </div>
    </footer>
  );
}

export default function App() {
  return (
    <div className="relative flex h-screen flex-col overflow-hidden font-['Open_Sans',sans-serif]">
      <TabStrip />
      <Toolbar />
      <BookmarkBar />
      <div className="flex min-h-0 flex-1 overflow-hidden border-t border-[#b4b4b4] bg-[#f6f6f6]">
        <Sidebar />
        <main className="flex min-w-0 flex-1 flex-col overflow-hidden">
          <PageHeader />
          <div className="grid shrink-0 grid-cols-4 items-start gap-[30px] px-5 pt-[15px]">
            <Panel title="Sipariş Listesi" icon={<ListIcon />} className="col-span-3">
              <OrderTable />
              <p className="pt-[18px] text-right text-[13px] leading-[18px] text-[#555]">
                Gösterilen: 1 ile 9 arası, toplam: 9 (1 Sayfa)
              </p>
            </Panel>
            <FilterPanel />
          </div>
          <p className="shrink-0 pt-[18px] text-center text-[13px] leading-[18px] text-[#555]">
            Altyapı: <a href="#opencart" className="text-[#1e91cf]">OpenCart</a> Türkçe Çeviri:{" "}
            <a href="#e-piksel" className="text-[#1e91cf]">E-Piksel</a> © 2009 - 2019 Tüm Hakları Saklıdır
          </p>
        </main>
        <Scrollbar />
      </div>
      <Taskbar />
      <div role="tooltip" className="absolute top-[106px] right-0 border border-[#1a1a1a] bg-white px-2 py-1 text-[11px] leading-4 text-black">
        Online Satış İş ilanları - Kariyer Fırsatları | Yenibiris.com
        <br />
        kurumsal.yenibiris.com/online-satis?operation=buy
      </div>
    </div>
  );
}
